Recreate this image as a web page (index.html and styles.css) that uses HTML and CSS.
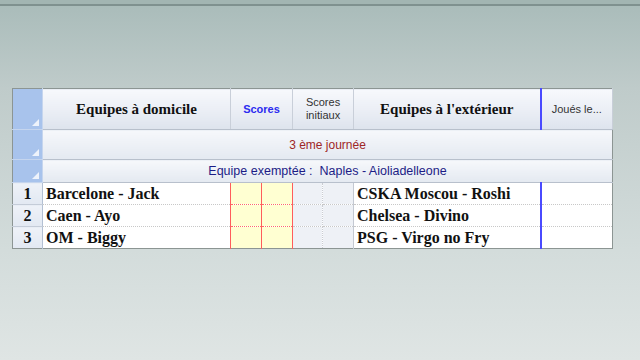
FILE: index.html
```html
<!DOCTYPE html>
<html lang="fr">
<head>
<meta charset="utf-8">
<title>Journée</title>
<link rel="stylesheet" href="styles.css">
</head>
<body>
<div class="topbar"></div>
<main class="stage">
  <table class="grid">
    <colgroup>
      <col class="c-rh"><col class="c-team"><col class="c-sc"><col class="c-sc"><col class="c-si"><col class="c-si2"><col class="c-team2"><col class="c-date">
    </colgroup>
    <thead>
      <tr class="head">
        <th class="rh blue"><span class="tri"></span></th>
        <th class="h-team">Equipes à domicile</th>
        <th class="h-scores" colspan="2">Scores</th>
        <th class="h-init" colspan="2">Scores<br>initiaux</th>
        <th class="h-team">Equipes à l'extérieur</th>
        <th class="h-date">Joués le...</th>
      </tr>
    </thead>
    <tbody>
      <tr class="band band-day">
        <th class="rh blue"><span class="tri"></span></th>
        <td colspan="7" class="day">3 ème journée</td>
      </tr>
      <tr class="band band-exempt">
        <th class="rh blue"><span class="tri"></span></th>
        <td colspan="7" class="exempt">Equipe exemptée :&nbsp; Naples - Aioliadelleone</td>
      </tr>
      <tr class="match">
        <th class="rh num">1</th>
        <td class="team">Barcelone - Jack</td>
        <td class="sc"></td><td class="sc"></td>
        <td class="si"></td><td class="si"></td>
        <td class="team">CSKA Moscou - Roshi</td>
        <td class="date"></td>
      </tr>
      <tr class="match">
        <th class="rh num">2</th>
        <td class="team">Caen - Ayo</td>
        <td class="sc"></td><td class="sc"></td>
        <td class="si"></td><td class="si"></td>
        <td class="team">Chelsea - Divino</td>
        <td class="date"></td>
      </tr>
      <tr class="match last">
        <th class="rh num">3</th>
        <td class="team">OM - Biggy</td>
        <td class="sc"></td><td class="sc"></td>
        <td class="si"></td><td class="si"></td>
        <td class="team">PSG - Virgo no Fry</td>
        <td class="date"></td>
      </tr>
    </tbody>
  </table>
</main>
</body>
</html>
```
FILE: styles.css
```css
html, body {
  margin: 0;
  padding: 0;
  width: 640px;
  height: 360px;
  overflow: hidden;
}
body {
  background: linear-gradient(180deg, #a8bbb8 0px, #abbdbb 10px, #bfcbca 88px, #d3dcdb 250px, #dfe5e4 360px);
  font-family: "Liberation Sans", Arial, sans-serif;
}
.topbar {
  height: 4px;
  background: #a2b5b2;
  border-bottom: 2px solid #7f918f;
}
.stage {
  padding: 82px 0 0 12px;
}
.grid {
  border-collapse: collapse;
  table-layout: fixed;
  width: 601px;
  border: 1px solid #8c9593;
  background: #fff;
}
.c-rh { width: 30px; }
.c-team { width: 188px; }
.c-sc { width: 31px; }
.c-si { width: 30px; }
.c-si2 { width: 31px; }
.c-team2 { width: 187px; }
.c-date { width: 72px; }

th, td {
  padding: 0;
  overflow: hidden;
  white-space: nowrap;
}

/* header row */
.head { height: 41px; }
.head th {
  background: linear-gradient(180deg, #f7f9fc 0%, #e9edf4 60%, #dde3ed 100%);
  border-right: 1px solid #c9cfd9;
  border-bottom: 1px solid #b8c0cc;
  vertical-align: middle;
  text-align: center;
  font-weight: normal;
}
.h-team {
  font-family: "Liberation Serif", "Times New Roman", serif;
  font-weight: bold !important;
  font-size: 15px;
  color: #111;
}
.h-scores {
  font-size: 11px;
  font-weight: bold !important;
  color: #2b2bf0;
}
.h-init {
  font-size: 11px;
  line-height: 13px;
  color: #333;
}
.h-date {
  font-size: 11px;
  color: #333;
}
.head th.h-date { border-left: 2px solid #4a4aff; }

/* row header column */
.rh {
  position: relative;
  border-right: 1px solid #b3c0d3;
}
.rh.blue {
  background: #a8c3ec !important;
  border-right: 1px solid #c5d5ee !important;
  border-bottom: 1px solid #c5d5ee !important;
}
.tri {
  position: absolute;
  right: 3px;
  bottom: 3px;
  width: 0;
  height: 0;
  border-style: solid;
  border-width: 0 0 7px 7px;
  border-color: transparent transparent #eef3fb transparent;
}

/* merged bands */
.band td {
  background: linear-gradient(180deg, #f6f8fb 0%, #e4e9f1 100%);
  border-bottom: 1px solid #b8c0cc;
  text-align: center;
  font-size: 12px;
}
.band-day { height: 30px; }
.band-day td { color: #9e2626; }
.band-exempt { height: 23px; }
.band-exempt td { color: #1c1c86; font-size: 12.5px; }

/* match rows */
.match { height: 22px; }
.match td, .match th {
  border-bottom: 1px dotted #c8c8c8;
}
.match.last td, .match.last th { border-bottom: none; }
.num {
  background: linear-gradient(180deg, #eef2f8 0%, #e2e8f2 100%);
  font-family: "Liberation Serif", "Times New Roman", serif;
  font-weight: bold;
  font-size: 16px;
  color: #111;
  text-align: center;
  border-bottom: 1px solid #c4ccd8 !important;
}
.match.last .num { border-bottom: none !important; }
.team {
  font-family: "Liberation Serif", "Times New Roman", serif;
  font-weight: bold;
  font-size: 16px;
  color: #111;
  padding-left: 3px;
  background: #fff;
}
.sc {
  background: #ffffd2;
  border-left: 1px solid #ff5c5c;
  border-right: 1px solid #ff5c5c;
  border-bottom: 1px dotted #ff6a6a !important;
}
.match.last .sc { border-bottom: none !important; }
.si {
  background: #eef1f6;
  border-right: 1px dotted #c9ccd2;
}
.si + .team { border-left: 1px solid #c4c9d2; }
.date {
  background: #fff;
  border-left: 2px solid #4a4aff;
}
```
